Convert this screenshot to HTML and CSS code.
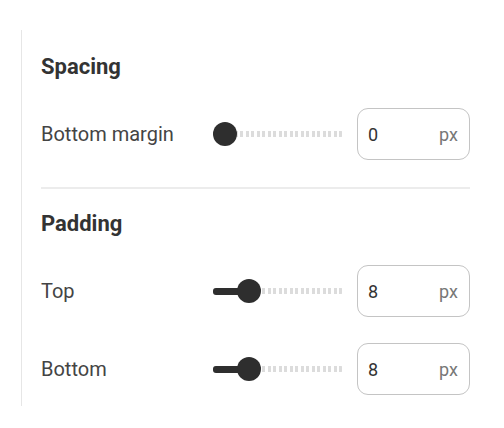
FILE: index.html
```html
<!DOCTYPE html>
<html>
<head>
<meta charset="utf-8">
<link rel="stylesheet" href="styles.css">
</head>
<body>
<div class="panel">
  <section class="group">
    <h2 class="heading">Spacing</h2>
    <div class="row">
      <span class="label">Bottom margin</span>
      <div class="slider">
        <div class="track"></div>
        <div class="fill" style="width:0px"></div>
        <div class="thumb" style="left:0px"></div>
      </div>
      <div class="field"><span class="value">0</span><span class="unit">px</span></div>
    </div>
  </section>
  <hr class="divider">
  <section class="group">
    <h2 class="heading">Padding</h2>
    <div class="row">
      <span class="label">Top</span>
      <div class="slider">
        <div class="track"></div>
        <div class="fill" style="width:32px"></div>
        <div class="thumb" style="left:24px"></div>
      </div>
      <div class="field"><span class="value">8</span><span class="unit">px</span></div>
    </div>
    <div class="row">
      <span class="label">Bottom</span>
      <div class="slider">
        <div class="track"></div>
        <div class="fill" style="width:32px"></div>
        <div class="thumb" style="left:24px"></div>
      </div>
      <div class="field"><span class="value">8</span><span class="unit">px</span></div>
    </div>
  </section>
</div>
</body>
</html>
```
FILE: styles.css
```css
html, body {
  margin: 0;
  padding: 0;
  background: #ffffff;
}
body {
  font-family: Roboto, "Liberation Sans", sans-serif;
  color: #444;
}
.panel {
  margin: 30px 0 0 21px;
  width: 449px;
  border-left: 1px solid #e6e6e6;
  padding: 25px 0 11px 19px;
  box-sizing: border-box;
}
.heading {
  margin: 0;
  font-size: 22px;
  font-weight: 700;
  color: #333;
  line-height: 24px;
}
.row {
  display: flex;
  align-items: center;
  margin-top: 29px;
}
.group .row + .row {
  margin-top: 26px;
}
.label {
  width: 172px;
  font-size: 20px;
  color: #444;
}
.slider {
  position: relative;
  width: 131px;
  height: 24px;
}
.track {
  position: absolute;
  left: 0;
  right: 0;
  top: 9px;
  height: 6px;
  border-radius: 3px;
  background: repeating-linear-gradient(90deg, #dcdcdc 0 3px, transparent 3px 5.5px);
}
.fill {
  position: absolute;
  left: 0;
  top: 9px;
  height: 7px;
  border-radius: 3px;
  background: #2e2e2e;
}
.thumb {
  position: absolute;
  top: 0;
  width: 24px;
  height: 24px;
  border-radius: 50%;
  background: #2e2e2e;
}
.field {
  margin-left: 13px;
  width: 113px;
  height: 52px;
  box-sizing: border-box;
  border: 1px solid #c4c4c4;
  border-radius: 11px;
  display: flex;
  align-items: center;
  justify-content: space-between;
  padding: 0 11px 0 10px;
  font-size: 18px;
}
.value {
  color: #333;
}
.unit {
  color: #777;
}
.divider {
  margin: 27px 0 0 0;
  border: 0;
  border-top: 2px solid #ececec;
}
.group + .divider + .group {
  padding-top: 23px;
}
```
